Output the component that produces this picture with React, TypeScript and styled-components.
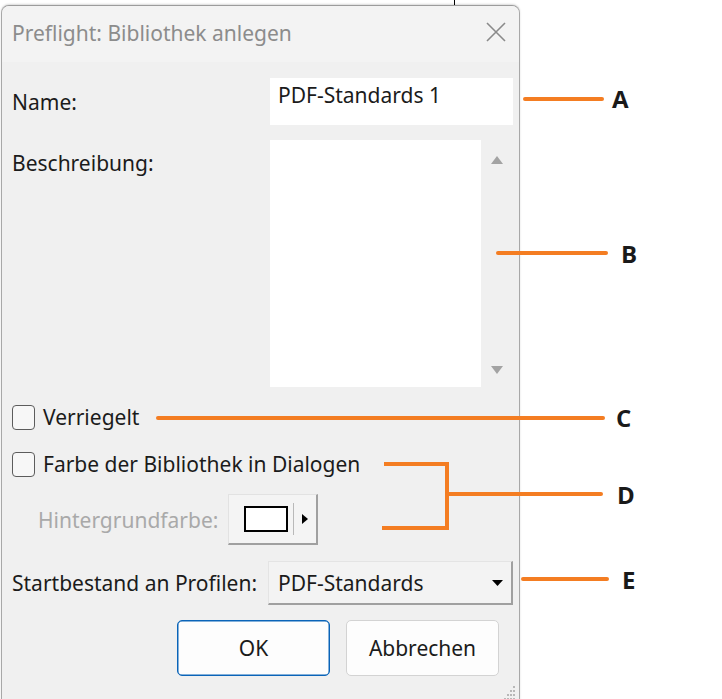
import React from 'react';
import styled, { createGlobalStyle } from 'styled-components';

const GlobalStyle = createGlobalStyle`
  html, body {
    margin: 0;
    padding: 0;
    background: #ffffff;
  }
  body {
    font-family: "Noto Sans", "Open Sans", sans-serif;
  }
`;

const ORANGE = '#f47d22';

const App: React.FC = () => {
  return (
    <Page>
      <GlobalStyle />
      <BackLine />
      <Dialog>
        <TitleBar>
          <Title>Preflight: Bibliothek anlegen</Title>
          <CloseIcon width="22" height="22" viewBox="0 0 22 22">
            <path d="M2 2 L20 20 M20 2 L2 20" stroke="#8a8a8a" strokeWidth="1.6" />
          </CloseIcon>
        </TitleBar>
        <Body>
          <Row>
            <Label width={258}>Name:</Label>
            <TextInput>PDF-Standards 1</TextInput>
          </Row>
          <Row top={15} align="flex-start">
            <Label width={258} padTop={10}>
              Beschreibung:
            </Label>
            <TextArea />
            <ScrollColumn>
              <Arrow viewBox="0 0 12 8" width="12" height="8">
                <path d="M6 0 L12 8 L0 8 Z" fill="#a3a3a3" />
              </Arrow>
              <Arrow viewBox="0 0 12 8" width="12" height="8">
                <path d="M0 0 L12 0 L6 8 Z" fill="#a3a3a3" />
              </Arrow>
            </ScrollColumn>
          </Row>
          <CheckRow top={17}>
            <CheckBox />
            <CheckLabel>Verriegelt</CheckLabel>
          </CheckRow>
          <CheckRow top={21}>
            <CheckBox />
            <CheckLabel>Farbe der Bibliothek in Dialogen</CheckLabel>
          </CheckRow>
          <Row top={17}>
            <DisabledLabel>Hintergrundfarbe:</DisabledLabel>
            <ColorButton>
              <Swatch />
              <Separator />
              <svg width="6" height="10" viewBox="0 0 6 10">
                <path d="M0 0 L6 5 L0 10 Z" fill="#000" />
              </svg>
            </ColorButton>
          </Row>
          <Row top={16}>
            <Label width={256}>Startbestand an Profilen:</Label>
            <Select>
              <span>PDF-Standards</span>
              <svg width="11" height="6" viewBox="0 0 11 6">
                <path d="M0 0 L11 0 L5.5 6 Z" fill="#000" />
              </svg>
            </Select>
          </Row>
          <ButtonRow>
            <DialogButton primary>OK</DialogButton>
            <DialogButton>Abbrechen</DialogButton>
          </ButtonRow>
        </Body>
        <Grip width="12" height="14" viewBox="0 0 12 14">
          <rect x="9" y="0" width="2" height="2" fill="#b8b8b8" />
          <rect x="6" y="4" width="2" height="2" fill="#b8b8b8" />
          <rect x="9" y="4" width="2" height="2" fill="#b8b8b8" />
          <rect x="3" y="8" width="2" height="2" fill="#b8b8b8" />
          <rect x="6" y="8" width="2" height="2" fill="#b8b8b8" />
          <rect x="9" y="8" width="2" height="2" fill="#b8b8b8" />
          <rect x="0" y="12" width="2" height="2" fill="#b8b8b8" />
          <rect x="3" y="12" width="2" height="2" fill="#b8b8b8" />
          <rect x="6" y="12" width="2" height="2" fill="#b8b8b8" />
          <rect x="9" y="12" width="2" height="2" fill="#b8b8b8" />
        </Grip>
      </Dialog>
      <Callouts width="722" height="699" viewBox="0 0 722 699">
        <g stroke={ORANGE} strokeWidth="4" strokeLinecap="round" fill="none">
          <line x1="525" y1="99" x2="602" y2="99" />
          <line x1="498" y1="253" x2="606" y2="253" />
          <line x1="158" y1="418" x2="603" y2="418" />
          <polyline points="384,464 447,464 447,528 382,528" strokeLinecap="butt" />
          <line x1="447" y1="494" x2="601" y2="494" />
          <line x1="523" y1="579" x2="607" y2="579" />
        </g>
        <g fontFamily="'Open Sans', 'Noto Sans', sans-serif" fontWeight="700" fontSize="24" fill="#1a1a1a">
          <text x="612" y="108">A</text>
          <text x="621" y="263">B</text>
          <text x="616" y="427">C</text>
          <text x="617" y="504">D</text>
          <text x="622" y="589">E</text>
        </g>
      </Callouts>
    </Page>
  );
};

const Page = styled.div`
  position: relative;
  width: 722px;
  height: 699px;
  overflow: hidden;
  background: #ffffff;
  padding-top: 5px;
  padding-left: 1px;
  box-sizing: border-box;
`;

const BackLine = styled.div`
  position: absolute;
  left: 454px;
  top: 0;
  width: 1px;
  height: 6px;
  background: #000;
`;

const Dialog = styled.div`
  position: relative;
  width: 519px;
  height: 720px;
  box-sizing: border-box;
  border: 1px solid #a8a8a8;
  border-top-color: #9c9c9c;
  border-radius: 8px 8px 0 0;
  background: #f0f0f0;
  box-shadow: 0 -1px 2px rgba(0, 0, 0, 0.15);
  display: flex;
  flex-direction: column;
  overflow: hidden;
`;

const TitleBar = styled.div`
  height: 56px;
  flex-shrink: 0;
  display: flex;
  align-items: center;
  justify-content: space-between;
  padding: 0 12px 0 10px;
  background: #f3f3f3;
`;

const Title = styled.div`
  font-size: 21px;
  color: #8c8c8c;
  margin-top: -2px;
`;

const CloseIcon = styled.svg`
  display: block;
  margin-top: -4px;
`;

const Body = styled.div`
  display: flex;
  flex-direction: column;
  padding: 16px 5px 0 10px;
  font-size: 21px;
  color: #1b1b1b;
`;

const Row = styled.div<{ top?: number; align?: string }>`
  display: flex;
  align-items: ${(p) => p.align ?? 'center'};
  margin-top: ${(p) => p.top ?? 0}px;
`;

const Label = styled.div<{ width: number; padTop?: number }>`
  width: ${(p) => p.width}px;
  flex-shrink: 0;
  padding-top: ${(p) => p.padTop ?? 0}px;
  line-height: 26px;
  white-space: nowrap;
`;

const TextInput = styled.div`
  width: 243px;
  height: 47px;
  box-sizing: border-box;
  background: #ffffff;
  padding: 4px 8px;
  line-height: 26px;
`;

const TextArea = styled.div`
  width: 211px;
  height: 247px;
  background: #ffffff;
`;

const ScrollColumn = styled.div`
  width: 32px;
  height: 247px;
  display: flex;
  flex-direction: column;
  align-items: center;
  justify-content: space-between;
  padding: 16px 0 13px;
  box-sizing: border-box;
`;

const Arrow = styled.svg`
  display: block;
`;

const CheckRow = styled.label<{ top: number }>`
  display: flex;
  align-items: center;
  gap: 8px;
  margin-top: ${(p) => p.top}px;
  height: 26px;
`;

const CheckBox = styled.span`
  width: 23px;
  height: 25px;
  flex-shrink: 0;
  box-sizing: border-box;
  border: 1.5px solid #5c5c5c;
  border-radius: 4px;
  background: #f7f7f7;
`;

const CheckLabel = styled.span`
  line-height: 26px;
  white-space: nowrap;
`;

const DisabledLabel = styled.div`
  width: 190px;
  padding-left: 26px;
  flex-shrink: 0;
  color: #a9a9a9;
  white-space: nowrap;
`;

const ColorButton = styled.div`
  width: 90px;
  height: 51px;
  box-sizing: border-box;
  display: flex;
  align-items: center;
  padding-left: 15px;
  gap: 5px;
  background: #f4f4f4;
  border-top: 1px solid #e2e2e2;
  border-left: 1px solid #e2e2e2;
  border-right: 2px solid #a0a0a0;
  border-bottom: 2px solid #a0a0a0;
`;

const Swatch = styled.div`
  width: 44px;
  height: 26px;
  box-sizing: border-box;
  border: 2px solid #000;
  background: #fff;
`;

const Separator = styled.div`
  width: 1px;
  height: 32px;
  background: #b9b9b9;
  margin-right: 3px;
`;

const Select = styled.div`
  width: 245px;
  height: 44px;
  box-sizing: border-box;
  display: flex;
  align-items: center;
  justify-content: space-between;
  padding: 0 8px 0 9px;
  background: #f3f3f3;
  border-top: 1px solid #e4e4e4;
  border-left: 1px solid #e4e4e4;
  border-right: 2px solid #a0a0a0;
  border-bottom: 2px solid #a0a0a0;
`;

const ButtonRow = styled.div`
  display: flex;
  justify-content: flex-end;
  gap: 16px;
  margin-top: 15px;
  padding-right: 15px;
`;

const DialogButton = styled.div<{ primary?: boolean }>`
  width: 153px;
  height: 56px;
  box-sizing: border-box;
  display: flex;
  align-items: center;
  justify-content: center;
  border-radius: 5px;
  background: #fdfdfd;
  border: 1px solid ${(p) => (p.primary ? '#0a64b8' : '#d3d3d3')};
  box-shadow: ${(p) => (p.primary ? 'inset 0 0 0 0.5px #0a64b8' : 'none')};
  font-size: 21px;
  color: #1b1b1b;
`;

const Grip = styled.svg`
  position: absolute;
  right: 3px;
  top: 680px;
`;

const Callouts = styled.svg`
  position: absolute;
  left: 0;
  top: 0;
  pointer-events: none;
`;

export default App;
